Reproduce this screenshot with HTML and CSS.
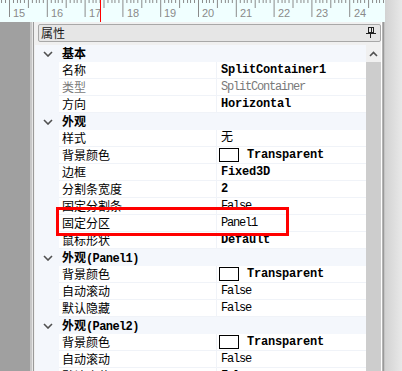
FILE: index.html
```html
<!DOCTYPE html>
<html lang="zh-CN">
<head>
<meta charset="utf-8">
<title>属性</title>
<link rel="stylesheet" href="styles.css">
</head>
<body>
<div class="screen">
  <div class="main">
    <div class="ruler">
      <svg width="385" height="22" viewBox="0 0 385 22" shape-rendering="crispEdges">
        <defs>
          <pattern id="cm" patternUnits="userSpaceOnUse" x="9" y="0" width="37.8" height="22">
            <g stroke="#8a8a8a" stroke-width="1">
              <line x1="0.5" y1="0" x2="0.5" y2="17"/>
              <line x1="4.28" y1="0" x2="4.28" y2="3"/>
              <line x1="8.06" y1="0" x2="8.06" y2="3"/>
              <line x1="11.84" y1="0" x2="11.84" y2="3"/>
              <line x1="15.62" y1="0" x2="15.62" y2="3"/>
              <line x1="19.4" y1="0" x2="19.4" y2="8"/>
              <line x1="23.18" y1="0" x2="23.18" y2="3"/>
              <line x1="26.96" y1="0" x2="26.96" y2="3"/>
              <line x1="30.74" y1="0" x2="30.74" y2="3"/>
              <line x1="34.52" y1="0" x2="34.52" y2="3"/>
            </g>
          </pattern>
        </defs>
        <rect x="0" y="0" width="385" height="22" fill="url(#cm)"/>
        <g class="ruler-num">
          <text x="13" y="17">15</text>
          <text x="51" y="17">16</text>
          <text x="89" y="17">17</text>
          <text x="127" y="17">18</text>
          <text x="164" y="17">19</text>
          <text x="202" y="17">20</text>
          <text x="240" y="17">21</text>
          <text x="278" y="17">22</text>
          <text x="316" y="17">23</text>
          <text x="354" y="17">24</text>
        </g>
        <line x1="100.5" y1="0" x2="100.5" y2="22" stroke="#ff0000" stroke-width="1"/>
      </svg>
    </div>
    <div class="work">
      <div class="desk"></div>
      <div class="desk-edge"></div>
      <div class="panel">
        <div class="panel-head">
          <span class="panel-title">属性</span>
          <svg class="pin" width="10" height="11" viewBox="0 0 10 11" shape-rendering="crispEdges">
            <rect x="2.5" y="0.5" width="5" height="5" fill="none" stroke="#222"/>
            <line x1="5.5" y1="1" x2="5.5" y2="5" stroke="#222"/>
            <line x1="0" y1="6.5" x2="10" y2="6.5" stroke="#222"/>
            <line x1="4.5" y1="7" x2="4.5" y2="11" stroke="#222"/>
          </svg>
        </div>
        <div class="grid-wrap">
          <div class="grid">
            <div class="row cat"><div class="gutter"><svg class="chev" width="10" height="6" viewBox="0 0 10 6"><path d="M1 1 L5 5 L9 1" fill="none" stroke="#505050" stroke-width="1.6"/></svg></div><div class="cat-label">基本</div></div>
            <div class="row"><div class="gutter"></div><div class="name">名称</div><div class="value b">SplitContainer1</div></div>
            <div class="row"><div class="gutter"></div><div class="name dim">类型</div><div class="value dim">SplitContainer</div></div>
            <div class="row"><div class="gutter"></div><div class="name">方向</div><div class="value b">Horizontal</div></div>
            <div class="row cat"><div class="gutter"><svg class="chev" width="10" height="6" viewBox="0 0 10 6"><path d="M1 1 L5 5 L9 1" fill="none" stroke="#505050" stroke-width="1.6"/></svg></div><div class="cat-label">外观</div></div>
            <div class="row"><div class="gutter"></div><div class="name">样式</div><div class="value">无</div></div>
            <div class="row"><div class="gutter"></div><div class="name">背景颜色</div><div class="value b"><span class="swatch"></span>Transparent</div></div>
            <div class="row"><div class="gutter"></div><div class="name">边框</div><div class="value b">Fixed3D</div></div>
            <div class="row"><div class="gutter"></div><div class="name">分割条宽度</div><div class="value b">2</div></div>
            <div class="row"><div class="gutter"></div><div class="name">固定分割条</div><div class="value">False</div></div>
            <div class="row"><div class="gutter"></div><div class="name">固定分区</div><div class="value">Panel1</div></div>
            <div class="row"><div class="gutter"></div><div class="name">鼠标形状</div><div class="value b">Default</div></div>
            <div class="row cat"><div class="gutter"><svg class="chev" width="10" height="6" viewBox="0 0 10 6"><path d="M1 1 L5 5 L9 1" fill="none" stroke="#505050" stroke-width="1.6"/></svg></div><div class="cat-label">外观<span class="mono">(Panel1)</span></div></div>
            <div class="row"><div class="gutter"></div><div class="name">背景颜色</div><div class="value b"><span class="swatch"></span>Transparent</div></div>
            <div class="row"><div class="gutter"></div><div class="name">自动滚动</div><div class="value">False</div></div>
            <div class="row"><div class="gutter"></div><div class="name">默认隐藏</div><div class="value">False</div></div>
            <div class="row cat"><div class="gutter"><svg class="chev" width="10" height="6" viewBox="0 0 10 6"><path d="M1 1 L5 5 L9 1" fill="none" stroke="#505050" stroke-width="1.6"/></svg></div><div class="cat-label">外观<span class="mono">(Panel2)</span></div></div>
            <div class="row"><div class="gutter"></div><div class="name">背景颜色</div><div class="value b"><span class="swatch"></span>Transparent</div></div>
            <div class="row"><div class="gutter"></div><div class="name">自动滚动</div><div class="value">False</div></div>
            <div class="row"><div class="gutter"></div><div class="name">默认隐藏</div><div class="value">False</div></div>
          </div>
          <div class="scrollbar">
            <div class="scroll-up"><svg width="9" height="6" viewBox="0 0 9 6"><path d="M1 5 L4.5 1.5 L8 5" fill="none" stroke="#505050" stroke-width="1.6"/></svg></div>
            <div class="thumb"></div>
          </div>
        </div>
      </div>
      <div class="panel-edge"></div>
    </div>
  </div>
  <div class="side"></div>
</div>
<div class="highlight"></div>
</body>
</html>
```
FILE: styles.css
```css
* { box-sizing: border-box; }
html, body { margin: 0; padding: 0; }
body {
  width: 402px;
  height: 371px;
  overflow: hidden;
  position: relative;
  background: #e4e4e4;
  font-family: "Noto Sans CJK SC", sans-serif;
  font-size: 12px;
  color: #000;
}
.screen { display: flex; width: 402px; height: 371px; }
.main { width: 385px; display: flex; flex-direction: column; }
.ruler { height: 22px; background: #f0ffff; }
.ruler svg { display: block; }
.ruler-num text {
  font-family: "Liberation Sans", sans-serif;
  font-size: 11px;
  fill: #8a8a8a;
}
.work { flex: 1; display: flex; min-height: 0; }
.desk { width: 30px; background: #a0a0a0; }
.desk-edge {
  width: 4px;
  background: linear-gradient(to right, #c8c8c8 0 2px, #e6e6e6 2px 3px, #9a9a9a 3px 4px);
}
.panel {
  width: 347px;
  background: #f0f0f0;
  display: flex;
  flex-direction: column;
  overflow: hidden;
}
.panel-edge {
  width: 4px;
  background: linear-gradient(to right, #ffffff 0 1px, #b4b4b4 1px 2px, #9a9a9a 2px 3px, #c4c4c4 3px 4px);
}
.side {
  width: 17px;
  background: linear-gradient(to right, #d2d2d2, #e8e8e8);
}
.panel-head {
  margin: 2px 0 0 4px;
  height: 18px;
  border: 1px solid #a8a8a8;
  border-radius: 2px;
  background: #e6e6e6;
  display: flex;
  align-items: center;
  justify-content: space-between;
  padding: 0 4px 0 2px;
}
.panel-title { line-height: 16px; color: #1a1a1a; }
.pin { display: block; margin-top: -1px; }
.grid-wrap {
  margin: 3px 0 0 1px;
  flex: 1;
  display: flex;
  min-height: 0;
  border-top: 0;
}
.grid { width: 331px; background: #fff; }
.row { display: flex; height: 17px; }
.gutter {
  width: 24px;
  background: #f4f7fc;
  display: flex;
  align-items: center;
}
.chev { display: block; margin-left: 8px; }
.name {
  width: 158px;
  padding-left: 3px;
  line-height: 16px;
  border-bottom: 1px solid #f0f3f8;
  border-right: 1px solid #f0f3f8;
  white-space: nowrap;
}
.value {
  flex: 1;
  padding-left: 4px;
  line-height: 16px;
  border-bottom: 1px solid #f0f3f8;
  white-space: nowrap;
  font-family: "Liberation Mono", "Noto Sans CJK SC", monospace;
  letter-spacing: -1.2px;
  display: flex;
  align-items: center;
}
.value.b { font-weight: bold; letter-spacing: -0.2px; }
.dim { color: #7a7a7a; }
.swatch {
  width: 20px;
  height: 14px;
  border: 1px solid #000;
  background: #fff;
  margin: 0 8px 0 -2px;
  flex: none;
}
.row.cat { background: #f4f7fc; }
.cat-label {
  padding-left: 3px;
  line-height: 16px;
  font-weight: bold;
  white-space: nowrap;
}
.mono {
  font-family: "Liberation Mono", monospace;
  letter-spacing: -0.6px;
}
.scrollbar {
  width: 15px;
  background: #f0f0f0;
  display: flex;
  flex-direction: column;
}
.scroll-up {
  height: 17px;
  display: flex;
  align-items: center;
  justify-content: center;
}
.scroll-up svg { display: block; }
.thumb { flex: 1; background: #cdcdcd; }
.highlight {
  position: absolute;
  left: 56px;
  top: 207px;
  width: 233px;
  height: 29px;
  border: 3px solid #ff0000;
}
```
